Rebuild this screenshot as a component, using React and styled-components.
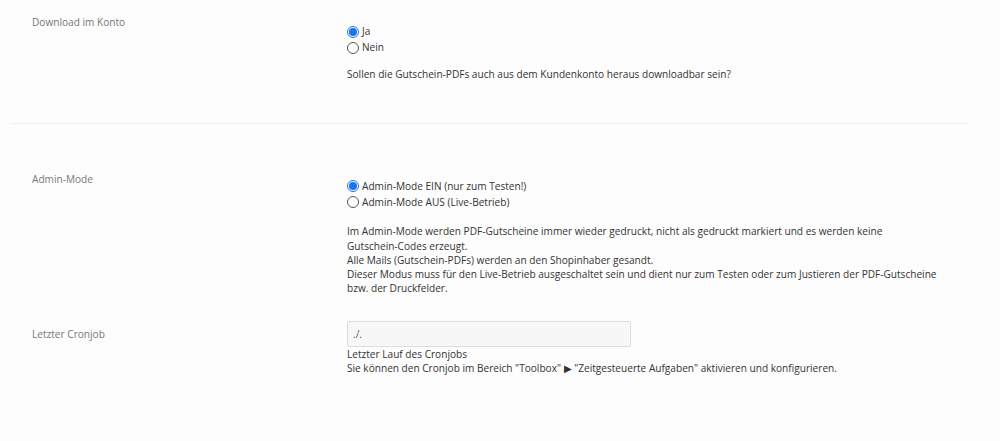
import React from 'react';
import styled, { createGlobalStyle } from 'styled-components';

const GlobalStyle = createGlobalStyle`
  body {
    margin: 0;
    background: #fdfdfd;
    font-family: "Open Sans", "Noto Sans", sans-serif;
    font-size: 10.1px;
    color: #333;
  }
`;

const Page = styled.div`
  width: 956px;
  margin-left: 12px;
`;

const Row = styled.div`
  display: grid;
  grid-template-columns: 315px 1fr;
  padding: ${p => p.$pad || '15px 0 0 20px'};
  border-bottom: ${p => (p.$divider ? '1px solid #efefef' : 'none')};
`;

const Label = styled.div`
  color: #777;
  line-height: 14px;
  padding-top: ${p => p.$offset || 0}px;
`;

const Value = styled.div`
  padding-top: ${p => p.$offset || 0}px;
  line-height: 14.3px;
`;

const RadioList = styled.div`
  display: flex;
  flex-direction: column;
  gap: 1px;
`;

const RadioLabel = styled.label`
  display: flex;
  align-items: center;
  gap: 3px;
  height: 15px;
`;

const Dot = styled.span`
  width: 12px;
  height: 12px;
  border-radius: 50%;
  box-sizing: border-box;
  border: 1px solid ${p => (p.$on ? '#1a73e8' : '#555')};
  background: #fff;
  display: inline-flex;
  align-items: center;
  justify-content: center;
  &::after {
    content: '';
    width: 8px;
    height: 8px;
    border-radius: 50%;
    background: ${p => (p.$on ? '#1a73e8' : 'transparent')};
  }
`;

const Help = styled.p`
  margin: ${p => p.$gap ?? 14}px 0 0;
`;

const Input = styled.div`
  width: 284px;
  height: 26px;
  box-sizing: border-box;
  border: 1px solid #ddd;
  border-radius: 2px;
  background: #f7f7f7;
  color: #555;
  padding: 0 5px;
  display: flex;
  align-items: center;
`;

const Radio = ({ on, children }) => (
  <RadioLabel>
    <Dot $on={on} />
    {children}
  </RadioLabel>
);

export default function App() {
  return (
    <>
      <GlobalStyle />
      <Page>
        <Row $divider $pad="15px 0 42px 20px">
          <Label>Download im Konto</Label>
          <Value $offset={9}>
            <RadioList>
              <Radio on>Ja</Radio>
              <Radio>Nein</Radio>
            </RadioList>
            <Help $gap={12}>Sollen die Gutschein-PDFs auch aus dem Kundenkonto heraus downloadbar sein?</Help>
          </Value>
        </Row>
        <Row $pad="48px 0 0 20px">
          <Label>Admin-Mode</Label>
          <Value $offset={6}>
            <RadioList>
              <Radio on>Admin-Mode EIN (nur zum Testen!)</Radio>
              <Radio>Admin-Mode AUS (Live-Betrieb)</Radio>
            </RadioList>
            <Help $gap={15}>
              Im Admin-Mode werden PDF-Gutscheine immer wieder gedruckt, nicht als gedruckt markiert und es werden keine
              <br />Gutschein-Codes erzeugt.
              <br />Alle Mails (Gutschein-PDFs) werden an den Shopinhaber gesandt.
              <br />Dieser Modus muss für den Live-Betrieb ausgeschaltet sein und dient nur zum Testen oder zum Justieren der PDF-Gutscheine
              <br />bzw. der Druckfelder.
            </Help>
          </Value>
        </Row>
        <Row $pad="25px 0 0 20px">
          <Label $offset={6}>Letzter Cronjob</Label>
          <Value>
            <Input>./.</Input>
            <Help $gap={0}>
              Letzter Lauf des Cronjobs
              <br />Sie können den Cronjob im Bereich "Toolbox" ▶ "Zeitgesteuerte Aufgaben" aktivieren und konfigurieren.
            </Help>
          </Value>
        </Row>
      </Page>
    </>
  );
}
